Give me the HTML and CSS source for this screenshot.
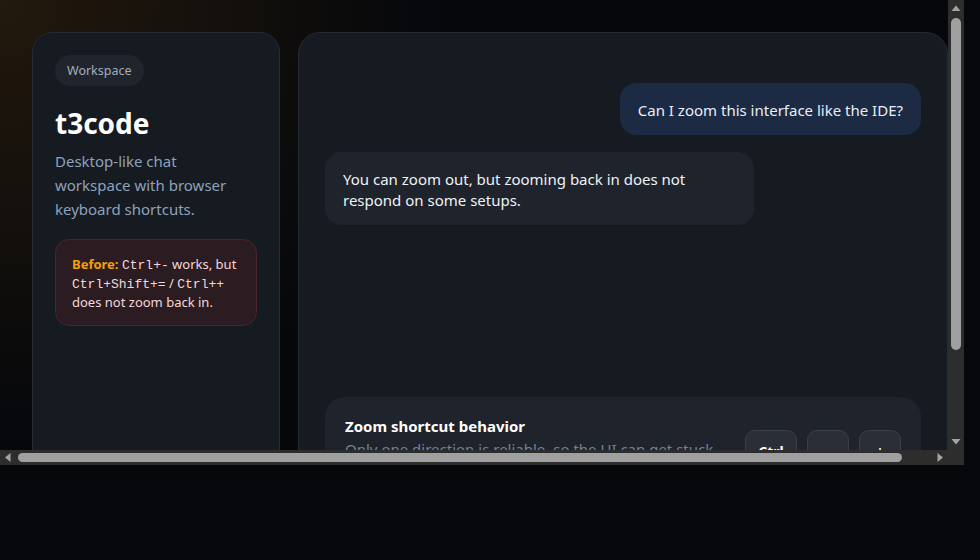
FILE: index.html
```html
<!DOCTYPE html>
<html lang="en">
<head>
<meta charset="utf-8">
<title>t3code</title>
<link rel="stylesheet" href="styles.css">
</head>
<body>
<div class="window">
  <div class="view">
    <div class="app">
      <aside class="sidebar">
        <span class="pill">Workspace</span>
        <h1 class="title">t3code</h1>
        <p class="desc">Desktop-like chat workspace with browser keyboard shortcuts.</p>
        <div class="warning">
          <strong class="warn-label">Before:</strong> <code>Ctrl+-</code> works, but <code>Ctrl+Shift+=</code> / <code>Ctrl++</code> does not zoom back in.
        </div>
      </aside>
      <main class="chat">
        <div class="messages">
          <div class="bubble bubble-user">Can I zoom this interface like the IDE?</div>
          <div class="bubble bubble-bot">You can zoom out, but zooming back in does not respond on some setups.</div>
        </div>
        <section class="info-card">
          <div class="info-text">
            <div class="info-title">Zoom shortcut behavior</div>
            <div class="info-sub">Only one direction is reliable, so the UI can get stuck zoomed out.</div>
          </div>
          <div class="keys">
            <kbd class="key key-wide">Ctrl</kbd>
            <kbd class="key">−</kbd>
            <kbd class="key">+</kbd>
          </div>
        </section>
      </main>
    </div>
  </div>
  <div class="vbar">
    <svg class="arrow" width="16" height="16" viewBox="0 0 16 16"><polygon points="3.5,11 12.5,11 8,5.5" fill="#a3a3a3"/></svg>
    <div class="vtrack"><div class="vthumb"></div></div>
    <svg class="arrow" width="16" height="16" viewBox="0 0 16 16"><polygon points="3.5,5 12.5,5 8,10.5" fill="#a3a3a3"/></svg>
  </div>
  <div class="hbar">
    <svg class="arrow" width="16" height="15" viewBox="0 0 16 15"><polygon points="10.5,3 10.5,12 5,7.5" fill="#a3a3a3"/></svg>
    <div class="htrack"><div class="hthumb"></div></div>
    <svg class="arrow" width="16" height="15" viewBox="0 0 16 15"><polygon points="5.5,3 5.5,12 11,7.5" fill="#a3a3a3"/></svg>
  </div>
  <div class="corner"></div>
</div>
</body>
</html>
```

FILE: styles.css
```css
html, body {
  margin: 0;
  padding: 0;
  background: #07080c;
}

body {
  font-family: "Noto Sans", "Open Sans", sans-serif;
  color: #e6edf7;
}

.window {
  width: 964px;
  height: 465px;
  display: grid;
  grid-template-columns: 948px 16px;
  grid-template-rows: 450px 15px;
}

.view {
  overflow: hidden;
}

/* scrollbars */
.vbar {
  background: #2d2d2d;
  display: flex;
  flex-direction: column;
}

.vtrack {
  flex: 1;
  padding: 2px 3px;
}

.vthumb {
  width: 10px;
  height: 332px;
  background: #a0a0a0;
  border-radius: 5px;
}

.hbar {
  background: #2d2d2d;
  display: flex;
}

.htrack {
  flex: 1;
  padding: 3px 2px;
}

.hthumb {
  width: 884px;
  height: 9px;
  background: #a0a0a0;
  border-radius: 5px;
}

.arrow {
  display: block;
  flex: none;
}

.corner {
  background: #2d2d2d;
}

/* page */
.app {
  box-sizing: border-box;
  width: 980px;
  height: 567px;
  padding: 32px;
  display: grid;
  grid-template-columns: 248px 1fr;
  gap: 18px;
  background:
    radial-gradient(circle at 0 0, rgba(170, 105, 20, 0.18), rgba(170, 105, 20, 0) 440px),
    #05070b;
}

.sidebar {
  box-sizing: border-box;
  background: #161a21;
  border: 1px solid #252a33;
  border-radius: 20px;
  padding: 22px;
  display: flex;
  flex-direction: column;
  align-items: flex-start;
}

.pill {
  display: inline-block;
  background: #20252d;
  color: #a3adbb;
  font-size: 12.5px;
  line-height: 31px;
  padding: 0 12px;
  border-radius: 999px;
}

.title {
  margin: 19px 0 0;
  font-size: 28px;
  line-height: 36px;
  font-weight: 700;
  color: #ffffff;
}

.desc {
  max-width: 186px;
  margin: 8px 0 0;
  font-size: 15px;
  line-height: 24px;
  color: #8ea2bb;
}

.warning {
  box-sizing: border-box;
  width: 202px;
  margin-top: 18px;
  background: #2a1c21;
  border: 1px solid #4b2329;
  border-radius: 14px;
  padding: 15px 16px 13px;
  font-size: 13px;
  line-height: 19px;
  color: #f6d7d9;
}

.warn-label {
  color: #f59e0b;
  font-weight: 700;
}

.warning code {
  font-family: "Liberation Mono", monospace;
  font-size: 13px;
  line-height: 1;
}

.chat {
  box-sizing: border-box;
  background: #161a21;
  border: 1px solid #252a33;
  border-radius: 22px;
  padding: 26px;
  display: flex;
  flex-direction: column;
}

.messages {
  margin-top: 24px;
  display: flex;
  flex-direction: column;
  gap: 17px;
}

.bubble {
  font-size: 15px;
  line-height: 21px;
  padding: 17px 18px 14px;
  border-radius: 16px;
  max-width: 72%;
  box-sizing: border-box;
}

.bubble-user {
  align-self: flex-end;
  background: #1c2a43;
  color: #e8eef8;
}

.bubble-bot {
  align-self: flex-start;
  width: 72%;
  background: #1f232b;
  color: #eef2f7;
}

.info-card {
  margin-top: auto;
  background: #1f232b;
  border-radius: 20px;
  padding: 18px 20px 24px;
  display: flex;
  align-items: flex-start;
  gap: 24px;
}

.info-text {
  flex: 1;
  min-width: 0;
}

.info-title {
  font-size: 15px;
  line-height: 22px;
  font-weight: 700;
  color: #ffffff;
}

.info-sub {
  margin-top: 1px;
  font-size: 15px;
  line-height: 23px;
  color: #6f8299;
}

.keys {
  margin-top: 15px;
  display: flex;
  gap: 10px;
}

.key {
  box-sizing: border-box;
  min-width: 42px;
  height: 42px;
  padding: 0 10px;
  display: flex;
  align-items: center;
  justify-content: center;
  background: #2a2e37;
  border: 1px solid #3a404b;
  border-radius: 10px;
  font-family: "Noto Sans", sans-serif;
  font-size: 14px;
  font-weight: 700;
  color: #ffffff;
}

.key-wide {
  min-width: 52px;
}
```
